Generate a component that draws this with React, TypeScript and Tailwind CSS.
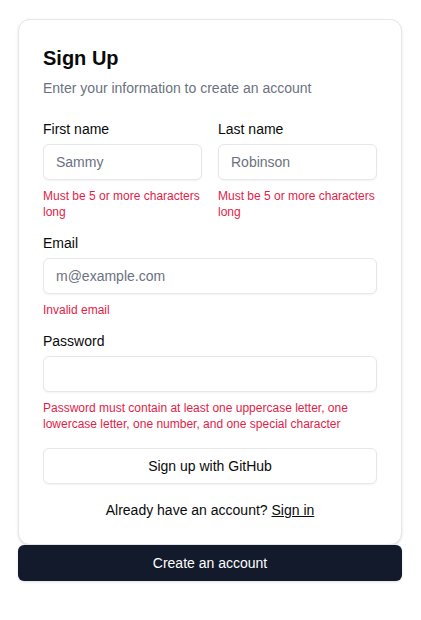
const font = { fontFamily: '"Liberation Sans", Arial, sans-serif' };

function Field({
  label,
  placeholder,
  type = "text",
  error,
}: {
  label: string;
  placeholder?: string;
  type?: string;
  error: string;
}) {
  return (
    <div className="flex flex-col gap-2">
      <label className="text-sm leading-none font-medium text-[#0a0a0a]">{label}</label>
      <input
        type={type}
        placeholder={placeholder}
        className="h-9 w-full rounded-md border border-[#e5e7eb] bg-white px-3 text-sm shadow-xs outline-none placeholder:text-[#6b7280]"
      />
      <p className="text-xs leading-4 text-[#e11d48]">{error}</p>
    </div>
  );
}

export default function App() {
  return (
    <div className="min-h-screen bg-white pt-[19px]" style={font}>
      <div className="ml-[18px] w-[384px]">
        <div className="rounded-xl border border-[#e5e7eb] bg-white shadow-sm">
          <div className="flex flex-col gap-1.5 p-6">
            <h1 className="text-xl leading-7 font-semibold text-[#0a0a0a]">Sign Up</h1>
            <p className="text-sm leading-5 text-[#6b7280]">
              Enter your information to create an account
            </p>
          </div>
          <div className="px-6 pb-6">
            <div className="grid gap-4">
              <div className="grid grid-cols-2 gap-4">
                <Field label="First name" placeholder="Sammy" error="Must be 5 or more characters long" />
                <Field label="Last name" placeholder="Robinson" error="Must be 5 or more characters long" />
              </div>
              <Field label="Email" placeholder="m@example.com" type="email" error="Invalid email" />
              <Field
                label="Password"
                type="password"
                error="Password must contain at least one uppercase letter, one lowercase letter, one number, and one special character"
              />
              <button className="h-9 w-full rounded-md border border-[#e5e7eb] bg-white text-sm text-[#0a0a0a] shadow-xs">
                Sign up with GitHub
              </button>
            </div>
            <div className="mt-4 text-center text-sm leading-5 text-[#0a0a0a]">
              Already have an account?{" "}
              <a href="#" className="underline">
                Sign in
              </a>
            </div>
          </div>
        </div>
        <button className="h-9 w-full rounded-md bg-[#131a2b] text-sm text-white shadow-sm">
          Create an account
        </button>
      </div>
    </div>
  );
}
